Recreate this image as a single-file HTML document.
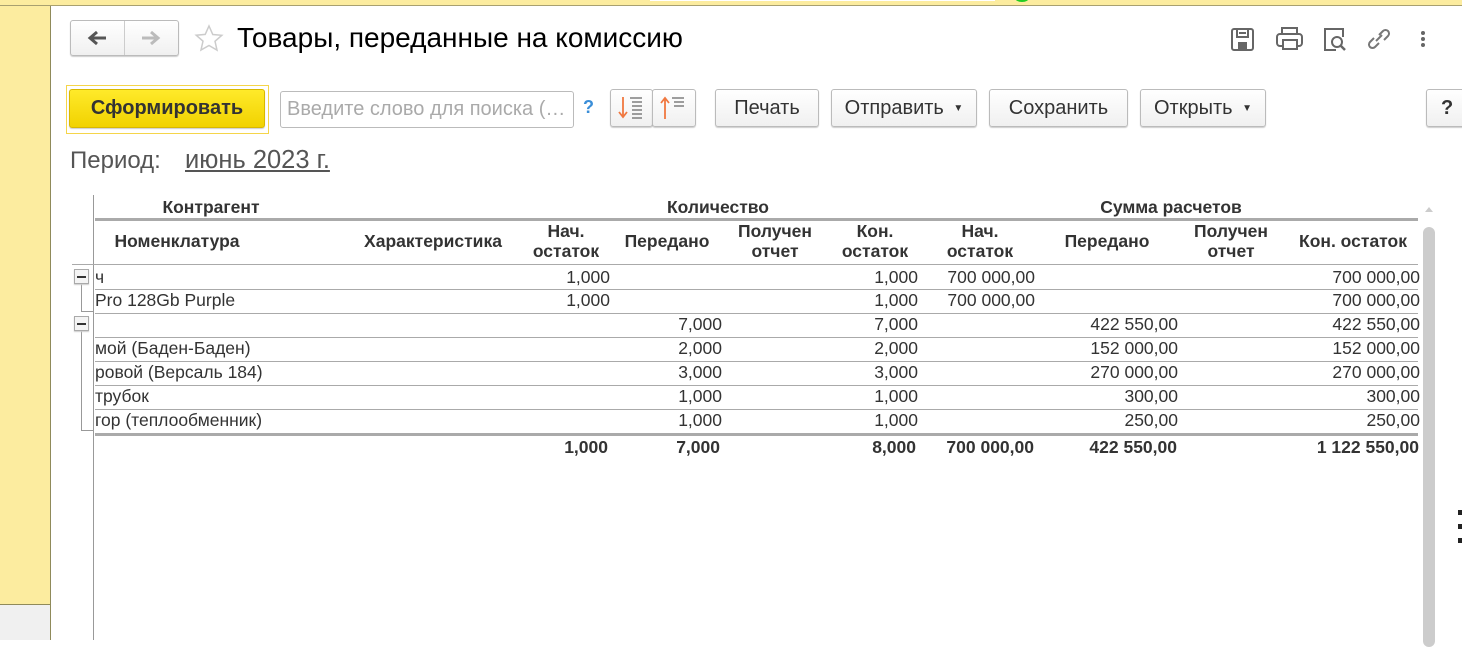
<!DOCTYPE html>
<html><head><meta charset="utf-8"><style>
*{margin:0;padding:0;box-sizing:border-box}
body{width:1462px;height:640px;overflow:hidden;background:#fff;font-family:"Liberation Sans",Arial,sans-serif;color:#333;position:relative}
.a{position:absolute}
.btn{position:absolute;height:38px;border:1px solid #bbb;border-radius:3px;background:linear-gradient(#fff,#f0f0f0);box-shadow:0 1px 1px rgba(0,0,0,.2);font-size:20px;color:#333;display:flex;align-items:center;justify-content:center}
.h{position:absolute;font-weight:bold;font-size:17.5px;color:#333;text-align:center;line-height:20px;white-space:nowrap}
.r{position:absolute;font-size:17.5px;text-align:right;line-height:20px;color:#333;white-space:nowrap}
.l{position:absolute;font-size:17.5px;line-height:20px;color:#333;white-space:nowrap}
.hl{position:absolute;height:1px;background:#aaa}
.b{font-weight:bold}
</style></head><body>
<div class="a" style="left:0;top:0;width:1462px;height:6px;background:#fcec9f;border-bottom:1px solid #a8a070"></div>
<div class="a" style="left:650px;top:0;width:345px;height:1px;background:#fff"></div>
<div class="a" style="left:1015px;top:-6px;width:14px;height:8px;border-radius:50%;background:#2c2"></div>
<div class="a" style="left:0;top:6px;width:51px;height:598px;background:#fcec9f;border-right:1px solid #8f8a5a"></div>
<div class="a" style="left:0;top:604px;width:51px;height:36px;background:#f0f0f0;border-right:1px solid #8f8a5a;border-top:1px solid #8f8a5a"></div>

<div class="btn" style="left:70px;top:20px;width:109px;height:36px"></div>
<div class="a" style="left:124px;top:21px;width:1px;height:34px;background:#ccc"></div>
<svg class="a" style="left:86px;top:29px" width="24" height="18"><path d="M4 9h16M11 3L4 9l7 6" stroke="#555" stroke-width="3" fill="none"/></svg>
<svg class="a" style="left:140px;top:29px" width="24" height="18"><path d="M2 9h16M11 3l7 6-7 6" stroke="#bbb" stroke-width="3" fill="none"/></svg>
<svg class="a" style="left:194px;top:24px" width="30" height="30"><path d="M15 2l3.8 8.5 9 .8-6.8 6 2 8.8L15 21.5 7 26l2-8.8-6.8-6 9-.8z" fill="none" stroke="#ccc" stroke-width="1.5"/></svg>
<div class="a" style="left:237px;top:22px;font-size:28px;color:#000;white-space:nowrap">Товары, переданные на комиссию</div>

<svg class="a" style="left:1230px;top:27px" width="26" height="26"><rect x="2" y="2" width="21" height="21" rx="2" fill="none" stroke="#666" stroke-width="2"/><path d="M7 3v7h11V3M9 6h7" stroke="#666" stroke-width="2" fill="none"/><rect x="8" y="15" width="9" height="7" fill="#666"/></svg>
<svg class="a" style="left:1276px;top:27px" width="28" height="24"><rect x="6" y="1" width="15" height="6" fill="none" stroke="#666" stroke-width="2"/><rect x="1" y="7" width="25" height="12" rx="3" fill="none" stroke="#666" stroke-width="2"/><rect x="7" y="13" width="14" height="9" fill="#fff" stroke="#666" stroke-width="2"/></svg>
<svg class="a" style="left:1322px;top:27px" width="26" height="26"><path d="M14 2H3v21h11" fill="none" stroke="#666" stroke-width="2"/><path d="M3 2h18v8" fill="none" stroke="#666" stroke-width="2"/><circle cx="15" cy="15" r="5" fill="none" stroke="#666" stroke-width="2"/><path d="M19 19l4 4" stroke="#666" stroke-width="2.5"/></svg>
<svg class="a" style="left:1366px;top:27px" width="26" height="24"><path d="M10 14l6-6M8 11l-4 4a3.5 3.5 0 0 0 5 5l4-4M18 13l4-4a3.5 3.5 0 0 0-5-5l-4 4" fill="none" stroke="#777" stroke-width="2"/></svg>
<div class="a" style="left:1421px;top:31px;width:4px;height:4px;background:#666;border-radius:50%;box-shadow:0 6px 0 #666,0 12px 0 #666"></div>

<div class="a" style="left:66px;top:85px;width:203px;height:49px;border:1px solid #f5d54a"></div>
<div class="btn" style="left:69px;top:89px;width:196px;height:39px;background:linear-gradient(#ffea2a,#f1d200);border-color:#d8b800;font-weight:bold;color:#333">Сформировать</div>
<div class="a" style="left:280px;top:91px;width:294px;height:37px;border:1px solid #bbb;border-radius:3px;font-size:20px;color:#aaa;padding:6px 0 0 6px;white-space:nowrap;overflow:hidden">Введите слово для поиска (…</div>
<div class="a" style="left:583px;top:97px;font-size:18px;font-weight:bold;color:#3a8ed8">?</div>
<div class="btn" style="left:610px;top:89px;width:43px"></div>
<div class="btn" style="left:652px;top:89px;width:44px"></div>
<svg class="a" style="left:618px;top:95px" width="28" height="26"><path d="M5 2v20M1 17l4 5 4-5" stroke="#f07840" stroke-width="1.8" fill="none"/><path d="M12 3h12M14 7h10M14 11h10M14 15h10M14 19h10M14 23h10" stroke="#666" stroke-width="1.3"/></svg>
<svg class="a" style="left:660px;top:95px" width="28" height="26"><path d="M5 24V4M1 8l4-5 4 5" stroke="#f07840" stroke-width="1.8" fill="none"/><path d="M12 3h12M14 7h10M14 11h10" stroke="#666" stroke-width="1.3"/></svg>
<div class="btn" style="left:715px;top:89px;width:104px">Печать</div>
<div class="btn" style="left:831px;top:89px;width:146px">Отправить&nbsp;<span style="font-size:10px;margin-left:4px">▼</span></div>
<div class="btn" style="left:989px;top:89px;width:139px">Сохранить</div>
<div class="btn" style="left:1140px;top:89px;width:126px">Открыть&nbsp;<span style="font-size:10px;margin-left:4px">▼</span></div>
<div class="btn" style="left:1426px;top:89px;width:50px;font-weight:bold;justify-content:flex-start;padding-left:14px">?</div>

<div class="a" style="left:70px;top:147px;font-size:24px;color:#555">Период:</div>
<div class="a" style="left:185px;top:146px;font-size:25.5px;color:#555;text-decoration:underline;white-space:nowrap">июнь 2023 г.</div>

<div class="a" style="left:93px;top:195px;width:1px;height:445px;background:#999"></div>
<div class="a" style="left:95px;top:218px;width:1323px;height:3px;background:#aaa"></div>
<div class="h" style="left:95px;top:197px;width:232px">Контрагент</div>
<div class="h" style="left:520px;top:197px;width:396px">Количество</div>
<div class="h" style="left:1040px;top:197px;width:262px">Сумма расчетов</div>
<div class="h" style="left:95px;top:231px;width:164px">Номенклатура</div>
<div class="h" style="left:352px;top:231px;width:162px">Характеристика</div>
<div class="h" style="left:516px;top:221px;width:100px">Нач.<br>остаток</div>
<div class="h" style="left:616px;top:231px;width:102px">Передано</div>
<div class="h" style="left:724px;top:221px;width:102px">Получен<br>отчет</div>
<div class="h" style="left:825px;top:221px;width:100px">Кон.<br>остаток</div>
<div class="h" style="left:930px;top:221px;width:100px">Нач.<br>остаток</div>
<div class="h" style="left:1056px;top:231px;width:102px">Передано</div>
<div class="h" style="left:1180px;top:221px;width:102px">Получен<br>отчет</div>
<div class="h" style="left:1291px;top:231px;width:124px">Кон. остаток</div>

<div class="hl" style="left:72px;top:264px;width:1346px"></div>
<div class="hl" style="left:95px;top:289px;width:1323px"></div>
<div class="hl" style="left:95px;top:313px;width:1323px"></div>
<div class="hl" style="left:95px;top:337px;width:1323px"></div>
<div class="hl" style="left:95px;top:361px;width:1323px"></div>
<div class="hl" style="left:95px;top:385px;width:1323px"></div>
<div class="hl" style="left:95px;top:409px;width:1323px"></div>
<div class="a" style="left:95px;top:433px;width:1323px;height:3px;background:#aaa"></div>

<div class="a" style="left:81px;top:276px;width:1px;height:36px;background:#999"></div>
<div class="a" style="left:81px;top:311px;width:12px;height:1px;background:#999"></div>
<div class="a" style="left:81px;top:324px;width:1px;height:107px;background:#999"></div>
<div class="a" style="left:81px;top:430px;width:12px;height:1px;background:#999"></div>
<div class="a" style="left:74px;top:269px;width:15px;height:15px;border:1px solid #aaa;background:#f4f4f4;box-shadow:0 1px 1px #ccc"><div style="margin:6px 2px;height:1.5px;background:#333"></div></div>
<div class="a" style="left:74px;top:316px;width:15px;height:15px;border:1px solid #aaa;background:#f4f4f4;box-shadow:0 1px 1px #ccc"><div style="margin:6px 2px;height:1.5px;background:#333"></div></div>

<div class="l" style="left:95px;top:267px">ч</div>
<div class="l" style="left:95px;top:290px">Pro 128Gb Purple</div>
<div class="l" style="left:95px;top:338px">мой (Баден-Баден)</div>
<div class="l" style="left:95px;top:362px">ровой (Версаль 184)</div>
<div class="l" style="left:95px;top:386px">трубок</div>
<div class="l" style="left:95px;top:410px">гор (теплообменник)</div>

<div class="r" style="right:852px;top:267px">1,000</div>
<div class="r" style="right:544px;top:267px">1,000</div>
<div class="r" style="right:427px;top:267px">700 000,00</div>
<div class="r" style="right:42px;top:267px">700 000,00</div>

<div class="r" style="right:852px;top:290px">1,000</div>
<div class="r" style="right:544px;top:290px">1,000</div>
<div class="r" style="right:427px;top:290px">700 000,00</div>
<div class="r" style="right:42px;top:290px">700 000,00</div>

<div class="r" style="right:740px;top:314px">7,000</div>
<div class="r" style="right:544px;top:314px">7,000</div>
<div class="r" style="right:284px;top:314px">422 550,00</div>
<div class="r" style="right:42px;top:314px">422 550,00</div>

<div class="r" style="right:740px;top:338px">2,000</div>
<div class="r" style="right:544px;top:338px">2,000</div>
<div class="r" style="right:284px;top:338px">152 000,00</div>
<div class="r" style="right:42px;top:338px">152 000,00</div>

<div class="r" style="right:740px;top:362px">3,000</div>
<div class="r" style="right:544px;top:362px">3,000</div>
<div class="r" style="right:284px;top:362px">270 000,00</div>
<div class="r" style="right:42px;top:362px">270 000,00</div>

<div class="r" style="right:740px;top:386px">1,000</div>
<div class="r" style="right:544px;top:386px">1,000</div>
<div class="r" style="right:284px;top:386px">300,00</div>
<div class="r" style="right:42px;top:386px">300,00</div>

<div class="r" style="right:740px;top:410px">1,000</div>
<div class="r" style="right:544px;top:410px">1,000</div>
<div class="r" style="right:284px;top:410px">250,00</div>
<div class="r" style="right:42px;top:410px">250,00</div>

<div class="r b" style="right:854px;top:437px">1,000</div>
<div class="r b" style="right:742px;top:437px">7,000</div>
<div class="r b" style="right:546px;top:437px">8,000</div>
<div class="r b" style="right:428px;top:437px">700 000,00</div>
<div class="r b" style="right:285px;top:437px">422 550,00</div>
<div class="r b" style="right:43px;top:437px">1 122 550,00</div>

<div class="a" style="left:1425px;top:207px;width:0;height:0;border-left:4px solid transparent;border-right:4px solid transparent;border-bottom:5px solid #ccc"></div>
<div class="a" style="left:1423px;top:227px;width:12px;height:420px;background:#ccc;border-radius:6px"></div>
<div class="a" style="left:1458px;top:510px;width:4px;height:5px;background:#222;box-shadow:0 14px 0 #222,0 28px 0 #222"></div>
</body></html>
